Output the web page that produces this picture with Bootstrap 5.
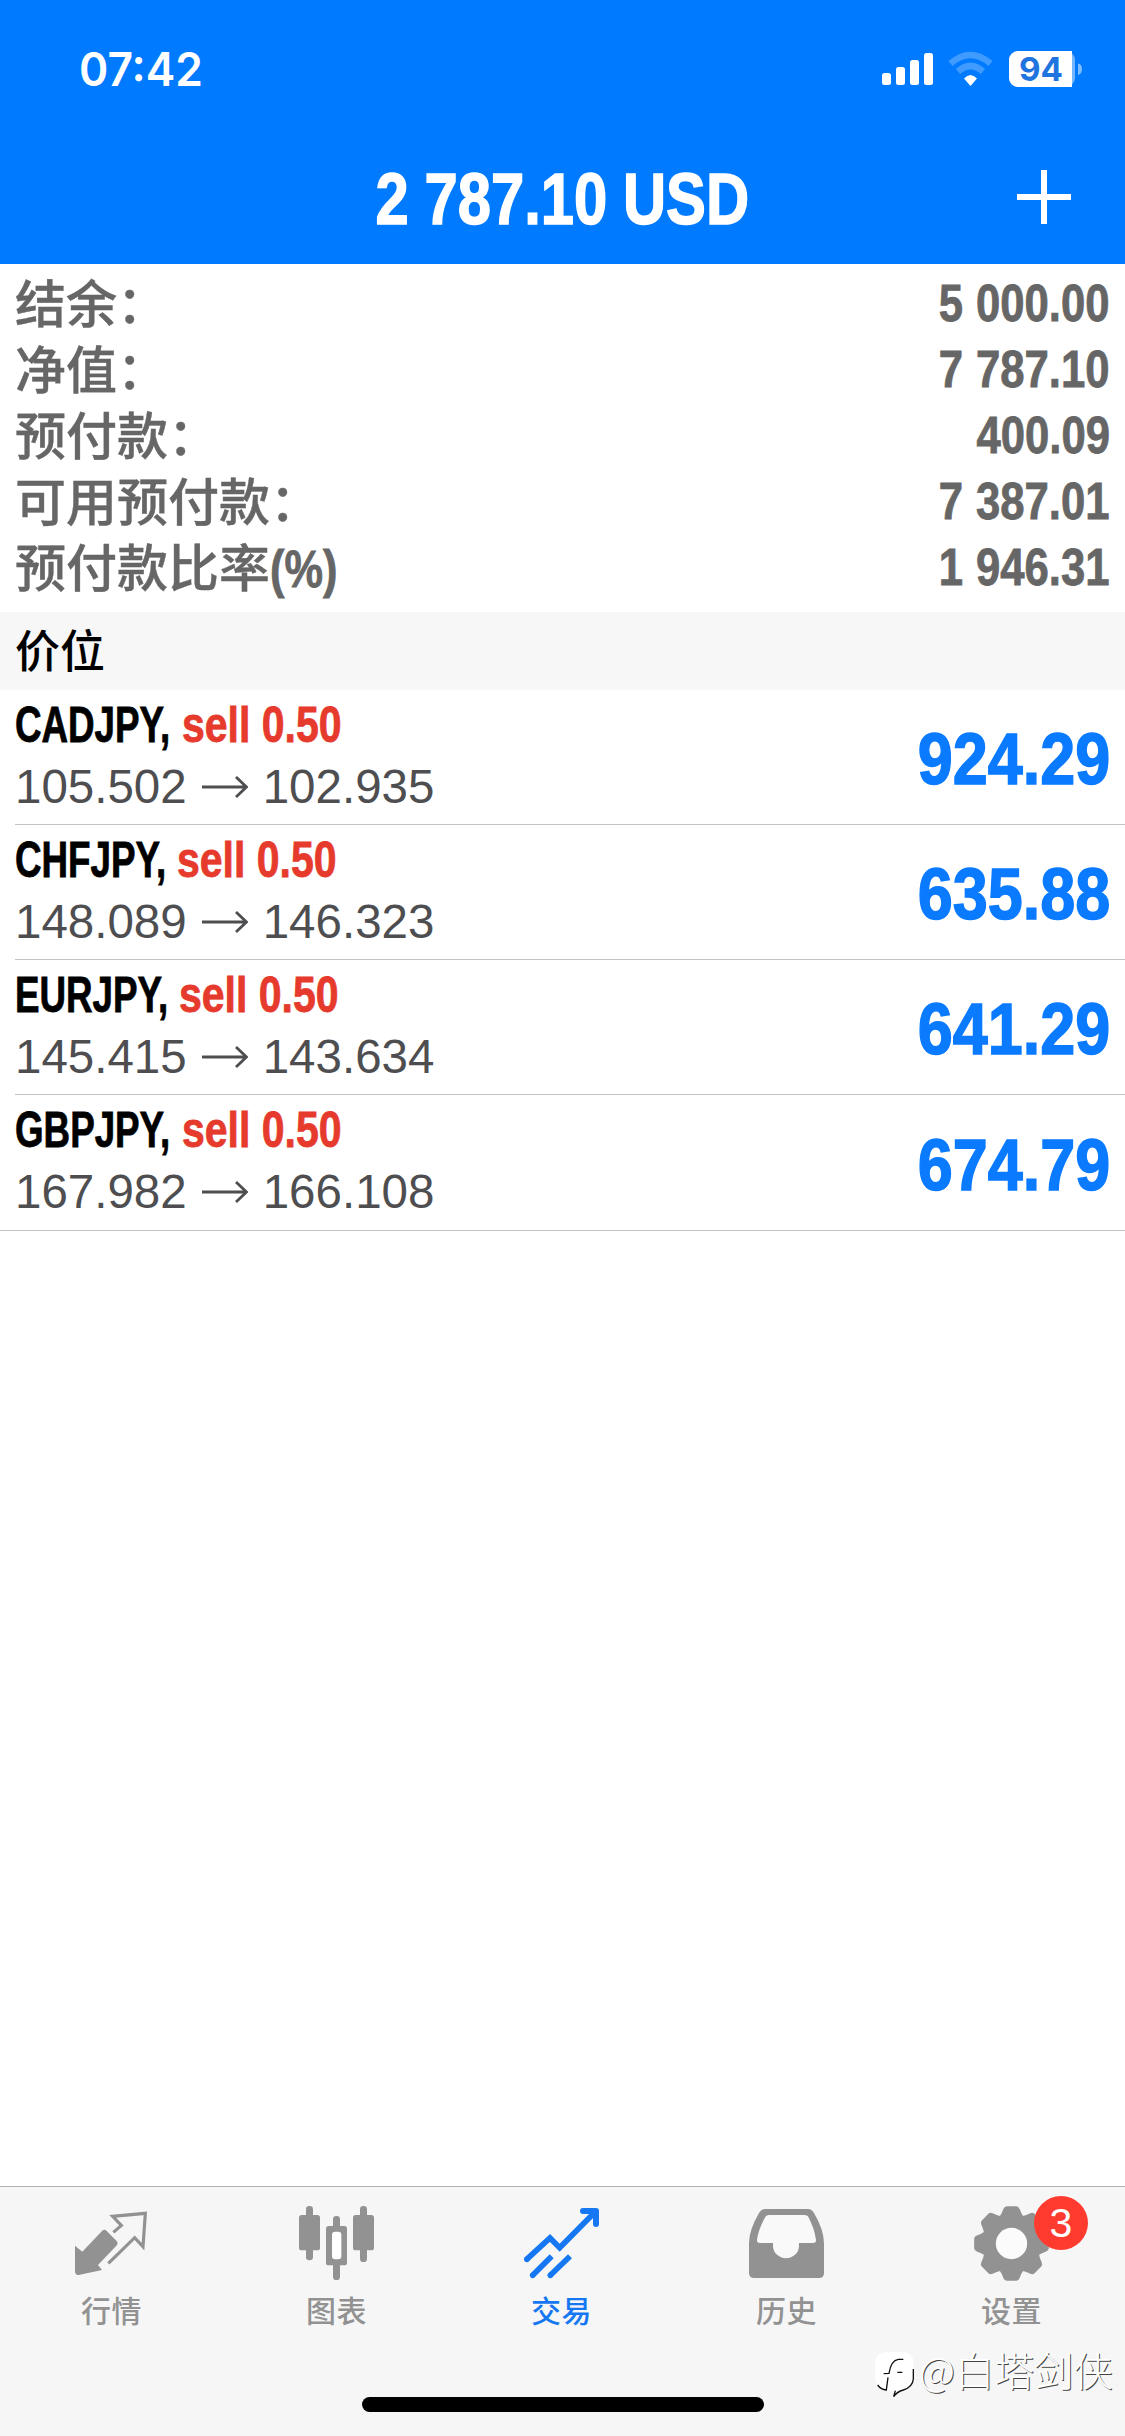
<!DOCTYPE html>
<html lang="zh-CN">
<head>
<meta charset="utf-8">
<meta name="viewport" content="width=device-width, initial-scale=1">
<title>交易</title>
<link href="https://cdn.jsdelivr.net/npm/bootstrap@5.3.0/dist/css/bootstrap.min.css" rel="stylesheet">
<style>
  body { font-family: "Liberation Sans", "Noto Sans CJK SC", sans-serif; color: #000; }
  .screen { width: 1125px; height: 2436px; background: #fff; line-height: 1; }
  .app-header { background: #007aff; height: 264px; }
  .status-bar { height: 132px; padding: 6px 43px 0 79px; }
  .clock { font: 600 46px/1 Inter, sans-serif; display: inline-block; transform: scaleX(.965); transform-origin: left; }
  .title-bar { height: 132px; }
  /* condensed bold figures */
  .cond { display: inline-block; font-weight: 700; white-space: nowrap; -webkit-text-stroke: .8px currentColor; }
  .app-title { font-size: 73px; transform: scaleX(.818); word-spacing: -1px; padding-top: 17px; -webkit-text-stroke-width: 1.5px; }
  .btn-add { right: 54px; top: 38px; }
  .summary { height: 348px; padding: 6px 15px 0; color: #666; }
  .summary-line { height: 66px; }
  .summary-label { font: 500 51px/51px "Noto Sans CJK SC", sans-serif; margin-top: -4px; height: 51px; -webkit-text-stroke: .4px currentColor; }
  .summary-unit { font-family: "Liberation Sans", sans-serif; transform: scaleX(.85); transform-origin: left; line-height: 1; }
  .summary-value { font-size: 51px; transform: scaleX(.856); transform-origin: right; word-spacing: 1px; }
  .section-title { height: 78px; background: #f7f7f7; padding: 0 15px 5px; font: 500 45px/1 "Noto Sans CJK SC", sans-serif; }
  .position { height: 135px; margin-left: 15px; padding-right: 15px; border-bottom: 1px solid #c3c3c5; }
  .position-last { margin-left: 0; padding-left: 15px; height: 136px; }
  .pair-line { font-size: 50px; height: 50px; margin-top: -4px; }
  .pair-name { transform: scaleX(.735); transform-origin: left; margin-right: -44px; }
  .pair-side { transform: scaleX(.82); transform-origin: left; color: #e63a2d; }
  .price-line { font-size: 47.5px; color: #4e4e51; margin-top: 13px; height: 48px; gap: 15px; }
  .profit { font-size: 73px; color: #0a7aff; transform: scaleX(.862); transform-origin: right; padding-top: 3px; -webkit-text-stroke-width: 1.5px; }
  .tab-bar { height: 250px; background: #f6f6f6; border-top: 1px solid #b2b2b2; }
  .tab-item { color: #929292; padding: 19px 2px 0 0; }
  .tab-item.active { color: #1577f2; }
  .tab-label { font: 500 30px/1 "Noto Sans CJK SC", sans-serif; letter-spacing: .5px; margin-top: 13px; }
  .tab-badge { width: 54px; height: 54px; left: 60px; top: -10px; background: #ff3b30; font-size: 41px; }
  .home-bar { width: 402px; height: 15px; margin: 0 auto 24px; }
  .watermark { left: 875px; top: 2349px; color: #fff; font: 300 39.5px/1 "Noto Sans CJK SC", sans-serif; }
  .watermark-text { text-shadow: 1px 1px 0 #444; white-space: nowrap; margin-top: -10px; padding-left: 1px; }
</style>
</head>
<body>
<div class="screen position-relative overflow-hidden d-flex flex-column">
  <header class="app-header text-white">
    <div class="status-bar d-flex justify-content-between align-items-center">
      <span class="clock">07:42</span>
      <svg class="overflow-visible" width="200" height="36" viewBox="0 0 200 36">
        <g fill="#fff">
          <rect y="22" width="9" height="12" rx="2.5"/><rect x="14" y="16" width="9" height="18" rx="2.5"/>
          <rect x="28" y="9" width="9" height="25" rx="2.5"/><rect x="42" y="2" width="9" height="32" rx="2.5"/>
          <path d="M82 27.500 Q88.500 20.500 95 27.500 L88.500 35Z"/>
        </g>
        <g fill="none" stroke="#fff" stroke-opacity=".25" stroke-width="6.500">
          <path d="M68.500 12.500 Q88.500 -4.500 108.500 12.500"/><path d="M76 20.500 Q88.500 9.500 101 20.500"/>
        </g>
        <rect x="127" width="66" height="36" rx="9" fill="#fff" fill-opacity=".45"/>
        <path d="M136 0H190V36H136A9 9 0 0 1 127 27V9A9 9 0 0 1 136 0Z" fill="#fff"/>
        <path d="M196 12.500Q200 13 200 18T196 24Z" fill="#fff" fill-opacity=".5"/>
        <text x="159" y="30" text-anchor="middle" font-family="Inter" font-weight="700" font-size="33" textLength="44" lengthAdjust="spacingAndGlyphs" fill="#1f74e0">94</text>
      </svg>
    </div>
    <div class="title-bar position-relative d-flex justify-content-center align-items-center pb-3">
      <span class="cond app-title">2 787.10 USD</span>
      <svg class="btn-add position-absolute" width="54" height="54"><path d="M0 27H54M27 0V54" stroke="#fff" stroke-width="6"/></svg>
    </div>
  </header>

  <section class="summary">
    <div class="summary-line d-flex justify-content-between align-items-center"><span class="summary-label">结余：</span><span class="cond summary-value">5 000.00</span></div>
    <div class="summary-line d-flex justify-content-between align-items-center"><span class="summary-label">净值：</span><span class="cond summary-value">7 787.10</span></div>
    <div class="summary-line d-flex justify-content-between align-items-center"><span class="summary-label">预付款：</span><span class="cond summary-value">400.09</span></div>
    <div class="summary-line d-flex justify-content-between align-items-center"><span class="summary-label">可用预付款：</span><span class="cond summary-value">7 387.01</span></div>
    <div class="summary-line d-flex justify-content-between align-items-center"><span class="summary-label">预付款比率<span class="cond summary-unit">(%)</span></span><span class="cond summary-value">1 946.31</span></div>
  </section>

  <div class="section-title d-flex align-items-center">价位</div>

  <main class="flex-grow-1">
    <div class="position d-flex justify-content-between align-items-center">
      <div>
        <div class="pair-line d-flex"><span class="cond pair-name">CADJPY,</span><span class="cond pair-side">sell 0.50</span></div>
        <div class="price-line d-flex align-items-center"><span>105.502</span><svg width="46" height="22"><path d="M0 11H44M34 1L44.500 11L34 21" fill="none" stroke="currentColor" stroke-width="2.800"/></svg><span>102.935</span></div>
      </div>
      <span class="cond profit">924.29</span>
    </div>
    <div class="position d-flex justify-content-between align-items-center">
      <div>
        <div class="pair-line d-flex"><span class="cond pair-name">CHFJPY,</span><span class="cond pair-side">sell 0.50</span></div>
        <div class="price-line d-flex align-items-center"><span>148.089</span><svg width="46" height="22"><path d="M0 11H44M34 1L44.500 11L34 21" fill="none" stroke="currentColor" stroke-width="2.800"/></svg><span>146.323</span></div>
      </div>
      <span class="cond profit">635.88</span>
    </div>
    <div class="position d-flex justify-content-between align-items-center">
      <div>
        <div class="pair-line d-flex"><span class="cond pair-name">EURJPY,</span><span class="cond pair-side">sell 0.50</span></div>
        <div class="price-line d-flex align-items-center"><span>145.415</span><svg width="46" height="22"><path d="M0 11H44M34 1L44.500 11L34 21" fill="none" stroke="currentColor" stroke-width="2.800"/></svg><span>143.634</span></div>
      </div>
      <span class="cond profit">641.29</span>
    </div>
    <div class="position position-last d-flex justify-content-between align-items-center">
      <div>
        <div class="pair-line d-flex"><span class="cond pair-name">GBPJPY,</span><span class="cond pair-side">sell 0.50</span></div>
        <div class="price-line d-flex align-items-center"><span>167.982</span><svg width="46" height="22"><path d="M0 11H44M34 1L44.500 11L34 21" fill="none" stroke="currentColor" stroke-width="2.800"/></svg><span>166.108</span></div>
      </div>
      <span class="cond profit">674.79</span>
    </div>
  </main>

  <footer class="tab-bar d-flex flex-column justify-content-between">
    <nav class="d-flex">
      <div class="tab-item flex-fill w-100 d-flex flex-column align-items-center">
        <svg width="75" height="75" viewBox="0 0 225 225">
          <path d="M3 119L25 137L84 75Q91 68 98 75L128 105Q134 112 127 119L72 177L84 192L14 207Q3 208 3 196Z" fill="currentColor"/>
          <path d="M118 79L142 58L116 31L214 22L207 122L182 95L103 172" fill="none" stroke="currentColor" stroke-width="9.500"/>
        </svg>
        <span class="tab-label">行情</span>
      </div>
      <div class="tab-item flex-fill w-100 d-flex flex-column align-items-center">
        <svg width="75" height="75" viewBox="0 0 225 225">
          <g fill="currentColor"><rect y="27" width="63" height="106" rx="8"/><rect x="21" width="21" height="163" rx="10"/>
          <rect x="162" y="27" width="63" height="106" rx="8"/><rect x="183" width="21" height="168" rx="10"/>
          <rect x="81" y="60" width="63" height="118" rx="8"/><rect x="102" y="30" width="21" height="192" rx="10"/></g>
          <rect x="99" y="77" width="28" height="83" rx="9" fill="#fff"/>
        </svg>
        <span class="tab-label">图表</span>
      </div>
      <div class="tab-item active flex-fill w-100 d-flex flex-column align-items-center">
        <svg width="75" height="75" viewBox="0 0 225 225" fill="none" stroke="currentColor" stroke-width="17">
          <path d="M8 160L78 96L107 125L213 18" stroke-linejoin="miter"/>
          <path d="M26 208L83 151M79 208L138 151"/>
          <path d="M177 15H216V54" stroke-width="18" stroke-linecap="round" stroke-linejoin="round"/>
          <g fill="currentColor" stroke="none"><circle cx="8.500" cy="160" r="8.500"/><circle cx="26" cy="208" r="8.500"/><circle cx="79" cy="208" r="8.500"/></g>
        </svg>
        <span class="tab-label">交易</span>
      </div>
      <div class="tab-item flex-fill w-100 d-flex flex-column align-items-center">
        <svg width="75" height="75" viewBox="0 0 225 225">
          <path d="M48 9H177Q188 9 195 21Q225 72 225 112V201Q225 216 210 216H15Q0 216 0 201V112Q0 72 30 21Q37 9 48 9Z" fill="currentColor"/>
          <path d="M60 27H167Q176 27 180 37Q196 68 201 101Q202 111 192 111H150V119A39 38 0 0 1 72 119V111H33Q23 111 24 101Q29 68 47 37Q51 27 60 27Z" fill="#f9f9f9"/>
        </svg>
        <span class="tab-label">历史</span>
      </div>
      <div class="tab-item flex-fill w-100 d-flex flex-column align-items-center">
        <div class="position-relative d-flex">
          <svg width="75" height="75" viewBox="-112.5 -112.5 225 225" fill="currentColor">
            <defs><path id="tooth" d="M-36 -80Q-30 -88 -24 -104Q-21 -112 -14 -112H14Q21 -112 24 -104Q30 -88 36 -80Z"/></defs>
            <circle r="89"/>
            <use href="#tooth"/><use href="#tooth" transform="rotate(45)"/><use href="#tooth" transform="rotate(90)"/><use href="#tooth" transform="rotate(135)"/>
            <use href="#tooth" transform="rotate(180)"/><use href="#tooth" transform="rotate(225)"/><use href="#tooth" transform="rotate(270)"/><use href="#tooth" transform="rotate(315)"/>
            <circle r="47" fill="#fbfbfb"/>
          </svg>
          <span class="tab-badge position-absolute rounded-circle text-white d-flex justify-content-center align-items-center">3</span>
        </div>
        <span class="tab-label">设置</span>
      </div>
    </nav>
    <div class="home-bar bg-black rounded-pill"></div>
  </footer>

  <div class="watermark position-absolute d-flex align-items-center">
    <svg width="43" height="50" viewBox="0 0 129 150">
      <path d="M35 9H85Q115 11 115 40V90Q115 112 85 121Q66 125 57 141L52 122Q38 128 28 121Q0 110 0 85V40Q2 11 35 9Z" fill="#fff"/>
      <path d="M115 60V90Q113 114 85 123Q66 128 56 143L61 125M8 108Q18 122 34 123L39 85M26 74L42 73Q48 34 70 31H85M67 70H82" fill="none" stroke="#111" stroke-width="4"/>
    </svg>
    <span class="watermark-text">@白塔剑侠</span>
  </div>
</div>
<script src="https://cdn.jsdelivr.net/npm/bootstrap@5.3.0/dist/js/bootstrap.bundle.min.js"></script>
</body>
</html>
